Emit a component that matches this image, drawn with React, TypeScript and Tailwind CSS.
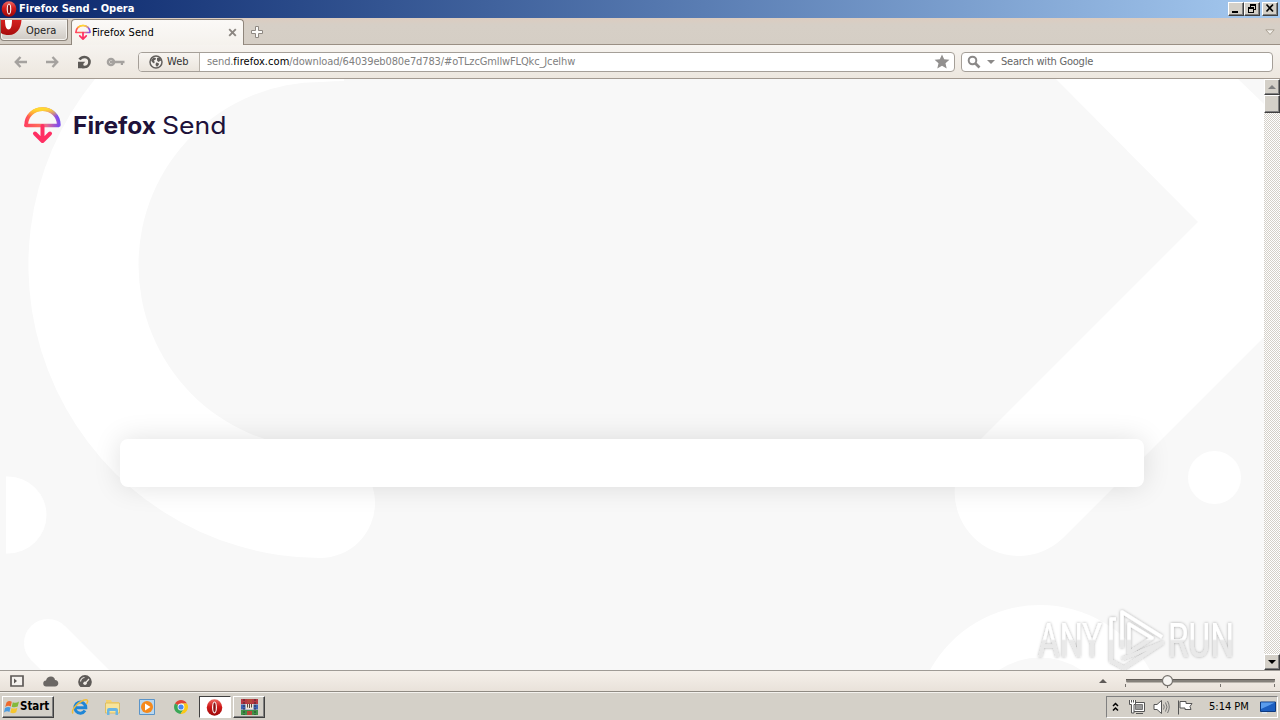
import React from "react";

const UI = "font-['DejaVu_Sans_Condensed','DejaVu_Sans',sans-serif]";
const RAISED =
  "border border-t-white border-l-white border-r-[#404040] border-b-[#404040] bg-[#d4d0c8] shadow-[inset_-1px_-1px_0_#808080]";

function OperaO({ size }: { size: number }) {
  return (
    <svg width={size} height={size} viewBox="0 0 16 16" className="shrink-0">
      <defs>
        <linearGradient id="operaRed" x1="0" y1="0" x2="0" y2="1">
          <stop offset="0" stopColor="#ef6a62" />
          <stop offset=".45" stopColor="#d01b1b" />
          <stop offset="1" stopColor="#9c0808" />
        </linearGradient>
      </defs>
      <ellipse cx="8" cy="8" rx="7.3" ry="7.8" fill="url(#operaRed)" />
      <ellipse cx="8" cy="8" rx="2.3" ry="5.6" fill="#fff" />
      <ellipse cx="8" cy="8" rx="1.2" ry="4.6" fill="#8d1414" />
    </svg>
  );
}

function SendMark({ width, height, id }: { width: number; height: number; id: string }) {
  return (
    <svg width={width} height={height} viewBox="0 0 37 37" className="shrink-0">
      <defs>
        <linearGradient id={id + "dome"} x1="0" y1=".9" x2="1" y2=".75">
          <stop offset="0" stopColor="#ff3d62" />
          <stop offset=".3" stopColor="#ff8a3c" />
          <stop offset=".55" stopColor="#ffae30" />
          <stop offset=".78" stopColor="#e0609a" />
          <stop offset="1" stopColor="#7a4df0" />
        </linearGradient>
        <linearGradient id={id + "top"} x1="0" y1="0" x2="0" y2="1">
          <stop offset="0" stopColor="#ffd930" />
          <stop offset="1" stopColor="#ffd930" stopOpacity="0" />
        </linearGradient>
        <linearGradient id={id + "base"} x1="0" y1="0" x2="1" y2="0">
          <stop offset="0" stopColor="#ff4060" />
          <stop offset=".4" stopColor="#ff6a58" />
          <stop offset=".65" stopColor="#e86a90" />
          <stop offset="1" stopColor="#7a4df0" />
        </linearGradient>
      </defs>
      <path d="M2.2 18C2.2 9 9.5 2.2 18.5 2.2S34.800 9 34.800 18" fill="none" stroke={`url(#${id}dome)`} strokeWidth="3.800" strokeLinecap="round" />
      <path d="M5 9.500C8 4.500 13 2.200 18.500 2.200S29 4.500 32 9.500" fill="none" stroke={`url(#${id}top)`} strokeWidth="3.800" />
      <path d="M2 16.700h33v3.600H2a1.800 1.800 0 0 1 0-3.600z" fill={`url(#${id}base)`} />
      <path d="M18.500 19v14M11 26.500l7.500 7.500 7.500-7.500" fill="none" stroke="#ff2f63" strokeWidth="4" strokeLinecap="round" strokeLinejoin="round" />
    </svg>
  );
}

function TitleBar() {
  return (
    <div className="flex h-[18px] items-center bg-linear-to-r from-[#0a246a] to-[#a6caf0] pr-[2px] pl-[1px]">
      <OperaO size={16} />
      <span className="ml-[2px] text-[11px] leading-[16px] font-bold text-white">Firefox Send - Opera</span>
      <div className="ml-auto flex pb-px">
        <button className={`flex h-[14px] w-4 items-center justify-center ${RAISED}`}>
          <svg width="12" height="11" viewBox="0 0 12 11"><path d="M2 8h6v2H2z" /></svg>
        </button>
        <button className={`flex h-[14px] w-4 items-center justify-center ${RAISED}`}>
          <svg width="12" height="11" viewBox="0 0 12 11" shapeRendering="crispEdges">
            <path d="M4 1h6v6H8V6h1V3H5v1H4zM2 4h6v6H2zM3 6v3h4V6z" fillRule="evenodd" />
          </svg>
        </button>
        <button className={`ml-[2px] flex h-[14px] w-4 items-center justify-center ${RAISED}`}>
          <svg width="12" height="11" viewBox="0 0 12 11"><path d="M2.500 1.500l6.500 7M9 1.500l-6.500 7" stroke="#000" strokeWidth="1.700" /></svg>
        </button>
      </div>
    </div>
  );
}

function TabBar() {
  return (
    <div className="flex h-[27px] items-start bg-linear-to-b from-[#dcccc0] via-[#d6cfc6] via-25% to-[#d5cec5] shadow-[inset_0_-1px_0_#9a8f84]">
      <button className="mt-px flex h-[22px] w-[68px] items-center rounded-b-[4px] border border-[#8d857c] border-t-[#b8b0a8] bg-linear-to-b from-[#f0eeeb] to-[#cfcac4] shadow-[inset_0_0_0_1px_#f5f3f0]">
        <svg width="21" height="20" viewBox="0 0 21 20" className="shrink-0">
          <defs>
            <linearGradient id="menuRed" x1="0" y1="0" x2="0" y2="1">
              <stop offset="0" stopColor="#d42020" />
              <stop offset="1" stopColor="#a80c0c" />
            </linearGradient>
          </defs>
          <path d="M0 0h20.500C20 8 16 15 8 15 4.500 15 2 14.500 0 13z" fill="url(#menuRed)" />
          <path d="M4 0h7c0 5-.8 9.500-3.500 9.500S4 5 4 0z" fill="#fff" />
        </svg>
        <span className="mt-[2px] ml-[4px] text-[11px] text-[#222]">Opera</span>
      </button>
      <div className="mt-px ml-[3px] flex h-[26px] w-[173px] items-center rounded-t-[4px] border border-b-0 border-[#8f867c] bg-linear-to-b from-[#fbf9f7] to-[#f5f2ed] pl-[3px]">
        <SendMark width={16} height={17} id="tab" />
        <span className="mt-[2px] ml-px text-[11px] tracking-[0.1px] text-black">Firefox Send</span>
        <svg width="9" height="9" viewBox="0 0 9 9" className="mr-[6px] ml-auto"><path d="M1.200 1.200l6.600 6.600M7.800 1.200L1.200 7.800" stroke="#8b8681" strokeWidth="1.900" /></svg>
      </div>
      <svg width="14" height="14" viewBox="0 0 14 14" className="mt-[7px] ml-[6px]">
        <path d="M5.500 1.500h3v4h4v3h-4v4h-3v-4h-4v-3h4z" fill="#fbfaf8" stroke="#8e8882" />
      </svg>
      <svg width="10" height="7" viewBox="0 0 10 7" className="mt-[11px] mr-[5px] ml-auto">
        <path d="M.8.800h8.400L5 5.500z" fill="#f4f1ec" stroke="#aaa294" />
      </svg>
    </div>
  );
}

function Toolbar() {
  return (
    <div className="flex h-[34px] items-center border-b border-[#a39a91] bg-linear-to-b from-[#f6f3ef] to-[#ede7df] pr-[7px] pl-[14px]">
      <svg width="14" height="12" viewBox="0 0 14 12"><path d="M6.500 1L1.800 6l4.700 5M2.500 6H13" fill="none" stroke="#a5a29f" strokeWidth="2.400" /></svg>
      <svg width="14" height="12" viewBox="0 0 14 12" className="ml-[17px]"><path d="M7.500 1l4.700 5-4.700 5M11.500 6H1" fill="none" stroke="#a5a29f" strokeWidth="2.400" /></svg>
      <svg width="15" height="14" viewBox="0 0 15 14" className="ml-[18px]">
        <path d="M2.500 4.500C4 2.500 5.500 2 7.500 2a5 5 0 0 1 0 10H5" fill="none" stroke="#5d5a57" strokeWidth="2.700" />
        <path d="M1 6.700h7.300L6.200 9l1.300 4.300H1z" fill="#5d5a57" />
      </svg>
      <svg width="20" height="10" viewBox="0 0 20 10" className="ml-[14px]">
        <circle cx="5" cy="5" r="3" fill="none" stroke="#a5a29f" strokeWidth="2.600" />
        <path d="M4 3.700h14.500v2.600H17V8h-2.200V6.300H4z" fill="#a5a29f" />
      </svg>
      <div className="ml-[12px] flex h-5 w-[817px] items-center overflow-hidden rounded-[4px] border border-[#a59f98] bg-white">
        <div className="flex h-full w-[61px] shrink-0 items-center border-r border-[#b8b2aa] bg-linear-to-b from-[#f8f5f1] to-[#ebe5dd] pl-[10px]">
          <svg width="14" height="14" viewBox="0 0 14 14">
            <circle cx="7" cy="7" r="6" fill="#f5f2ee" stroke="#625f5c" strokeWidth="1.500" />
            <path d="M2 5L4.500 2.500l2.500.5-.5 1.700-1.700.8 1 1.500L5 8.500 3 7zM8 3l2.500-.5 2 3-1.500.5L9.500 7 8 5.500zM7 7.500l2.500.5.500 1.500L8 12 6.500 10z" fill="#625f5c" />
          </svg>
          <span className="mt-[2px] ml-[4px] text-[11px] text-[#333]">Web</span>
        </div>
        <span className="mt-[2px] ml-[7px] text-[11px] tracking-[-0.13px] whitespace-nowrap text-[#808080]">
          send.<span className="tracking-[0.05px] text-black">firefox.com</span>/download/64039eb080e7d783/#oTLzcGmllwFLQkc_Jcelhw
        </span>
        <svg width="16" height="15" viewBox="0 0 16 15" className="mr-[4px] ml-auto">
          <path d="M8 .5l2.200 4.800 5.200.5-3.900 3.500 1.200 5.200L8 11.800l-4.700 2.700 1.200-5.200L.600 5.800l5.200-.5z" fill="#92908f" />
        </svg>
      </div>
      <div className="ml-[6px] flex h-5 flex-1 items-center rounded-[4px] border border-[#a59f98] bg-white pl-[5px]">
        <svg width="14" height="14" viewBox="0 0 14 14">
          <circle cx="5.500" cy="5.500" r="3.800" fill="none" stroke="#8b8988" strokeWidth="2" />
          <path d="M8.500 8.500l4 4" stroke="#8b8988" strokeWidth="2.600" />
        </svg>
        <svg width="8" height="4" viewBox="0 0 8 4" className="ml-[6px]"><path d="M0 0h8L4 4z" fill="#8b8988" /></svg>
        <span className="mt-[2px] ml-[6px] text-[11px] tracking-[-0.23px] text-[#666]">Search with Google</span>
      </div>
    </div>
  );
}

function Backdrop() {
  return (
    <svg width="1264" height="591" viewBox="0 79 1264 591" className="absolute inset-0">
      <g fill="#fff">
        <path d="M95 79A293 293 0 0 0 320 558A55 55 0 0 0 320 448A182.500 183 0 0 1 322 82Q334 81 344 81V79z" />
        <path d="M1056 79L1198 222L973 447A64 64 0 0 0 1063 538L1264 337V104L1238 79z" />
        <ellipse cx="1214.500" cy="477.500" rx="26.500" ry="26.500" />
        <path d="M6 476.500H8A38.500 38.500 0 0 1 8 553.500H6z" />
        <path d="M41 670L31 660A24 24 0 0 1 65 626L109 670z" />
        <path d="M930 670A125.600 125.600 0 0 1 1150 670H1081A74 74 0 0 0 999 670z" />
      </g>
    </svg>
  );
}

function Watermark() {
  return (
    <svg width="264" height="72" viewBox="1000 602 264 72" className="absolute right-0 bottom-[-4px]">
      <defs>
        <linearGradient id="wm" gradientUnits="userSpaceOnUse" x1="0" y1="610" x2="0" y2="668">
          <stop offset=".5" stopColor="#fff" />
          <stop offset=".53" stopColor="#e9e9e9" />
        </linearGradient>
        <filter id="wmShadow" x="-10%" y="-20%" width="120%" height="140%">
          <feDropShadow dx="0" dy="0" stdDeviation="1.500" floodColor="#000" floodOpacity=".34" />
        </filter>
      </defs>
      <g filter="url(#wmShadow)" fill="url(#wm)" className="font-['Roboto',sans-serif]">
        <text x="1038" y="657" fontSize="49" textLength="64" lengthAdjust="spacingAndGlyphs">ANY</text>
        <text x="1168" y="657" fontSize="49" textLength="66" lengthAdjust="spacingAndGlyphs">RUN</text>
        <g fill="none" stroke="url(#wm)" strokeWidth="3.500" strokeLinejoin="round">
          <path d="M1122 648V612L1162 637M1116 619L1111 619V661L1124 668L1162 643L1122 659" />
          <path d="M1129 653V624L1152 638z" />
        </g>
      </g>
    </svg>
  );
}

function ScrollBar() {
  return (
    <div className="flex w-4 shrink-0 flex-col bg-[#ebe9e5] bg-[conic-gradient(#d4d0c8_25%,#ffffff_0_50%,#d4d0c8_0_75%,#ffffff_0)] bg-[length:2px_2px]">
      <div className={`flex h-4 items-center justify-center ${RAISED}`}>
        <svg width="8" height="4" viewBox="0 0 8 4"><path d="M0 4h8L4 0z" fill="#808080" /></svg>
      </div>
      <div className={`h-[18px] ${RAISED}`} />
      <div className={`mt-auto flex h-4 items-center justify-center ${RAISED}`}>
        <svg width="8" height="4" viewBox="0 0 8 4"><path d="M0 0h8L4 4z" /></svg>
      </div>
    </div>
  );
}

function Page() {
  return (
    <div className="flex h-[591px]">
      <div className="relative flex flex-1 flex-col overflow-hidden bg-[#f8f8f8]">
        <Backdrop />
        <header className="relative mt-[28px] ml-6 flex h-[37px] items-start">
          <SendMark width={37} height={37} id="logo" />
          <svg width="170" height="37" viewBox="0 0 170 37" className="ml-[10px] font-['Inter',sans-serif]" fill="#20123a">
            <text x="2" y="27" fontSize="24" fontWeight="700" textLength="83" lengthAdjust="spacingAndGlyphs">Firefox</text>
            <text x="91" y="27" fontSize="24" fontWeight="400" textLength="64.500" lengthAdjust="spacingAndGlyphs">Send</text>
          </svg>
        </header>
        <main className="relative mx-[120px] mt-[295px] h-12 rounded-lg bg-white shadow-[0_0_28px_rgba(0,0,0,0.12)]" />
        <Watermark />
      </div>
      <ScrollBar />
    </div>
  );
}

function StatusBar() {
  return (
    <div className="flex h-[22px] items-center border-t border-b border-t-[#9f9b96] border-b-[#8f8a83] bg-linear-to-b from-[#f5f0ea] to-[#e9e2da] pl-[10px]">
      <svg width="14" height="12" viewBox="0 0 14 12"><path d="M1 1h12v10H1z" fill="#f5f2ee" stroke="#5e5a57" strokeWidth="1.700" /><path d="M4 3.500L7 6 4 8.500z" fill="#5e5a57" /></svg>
      <svg width="16" height="11" viewBox="0 0 16 11" className="ml-[19px]"><path d="M3.500 10.500a3 3 0 0 1-.5-6C3.500 2 5.500.500 8 .500c2.200 0 3.800 1.500 4 3.500 2 0 3.300 1.400 3.300 3.200S14 10.500 12 10.500z" fill="#6b6764" /></svg>
      <svg width="16" height="14" viewBox="0 0 16 14" className="ml-[18px]">
        <path d="M3.500 13A6.800 6.800 0 1 1 12.500 13z" fill="#5e5a57" />
        <path d="M3.500 7.500A4.600 4.600 0 0 1 7.500 3.500M12 5L8.500 9" fill="none" stroke="#f0ebe5" strokeWidth="1.200" />
        <circle cx="8" cy="9.300" r="1.700" fill="#f0ebe5" />
      </svg>
      <svg width="8" height="4" viewBox="0 0 8 4" className="ml-auto"><path d="M0 4h8L4 0z" fill="#5e5a57" /></svg>
      <svg width="152" height="18" viewBox="0 0 152 18" className="mr-[3px] ml-[18px]">
        <rect x="1" y="7" width="149" height="3.500" rx="1.500" fill="#85817b" />
        <path d="M1 7.500h149" stroke="#625e59" />
        <path d="M.500 12v3M42.500 13v3M95.500 12v3M149.500 12v3" stroke="#77736e" />
        <circle cx="42.500" cy="8.700" r="5" fill="#f7f5f2" stroke="#77736e" strokeWidth="1.200" />
      </svg>
    </div>
  );
}

function TaskBar() {
  return (
    <div className="flex h-[28px] items-center bg-[#d4d0c8] pt-[2px] pr-[2px] pl-[2px] shadow-[inset_0_1px_0_#f4f2ee]">
      <button className={`flex h-[22px] w-[52px] items-center pl-px ${RAISED}`}>
        <svg width="16" height="16" viewBox="0 0 16 16" className="shrink-0">
          <path d="M2.500 3.500Q5 1 7.800 2.800L6.800 7.500Q4 6 1.200 8z" fill="#ee6a2c" />
          <path d="M8.800 3.200Q12 4.500 15 2.500L13.700 7.500Q10.500 9 7.700 7.800z" fill="#84b93a" />
          <path d="M1 9Q4 7.300 6.600 8.600L5.400 13Q3 11.500 0 13.500z" fill="#4a9be0" />
          <path d="M7.500 9Q10.300 10.300 13.400 8.700L12.200 13.300Q9 15 6.300 13.400z" fill="#f6c62f" />
        </svg>
        <span className="text-[11.500px] font-bold tracking-[-0.050px] text-black">Start</span>
      </button>
      <svg width="18" height="18" viewBox="0 0 18 18" className="ml-[17px]">
        <path d="M14 12.500A5.500 5.500 0 1 1 14.800 9.700H4.500" fill="none" stroke="#1f86d6" strokeWidth="3" />
        <path d="M2 15.500C-.5 12 8.500 2.500 15 1.800c2.500-.2 1.700 2.700.5 4.200" fill="none" stroke="#f0bd3a" strokeWidth="1.500" />
      </svg>
      <svg width="18" height="18" viewBox="0 0 18 18" className="ml-[15px]">
        <path d="M2 2h5l1 2h7v5H2z" fill="#f3d272" />
        <path d="M1.500 5h14v10h-14z" fill="#f8e49a" stroke="#d9b654" strokeWidth=".8" />
        <path d="M3 17v-5q0-2 2-2h7q2 0 2 2v5h-2.500v-4h-6v4z" fill="#69b5e4" />
      </svg>
      <svg width="18" height="18" viewBox="0 0 18 18" className="ml-[16px]">
        <path d="M1.500 1.500h15v15h-15z" fill="#b9d7ef" stroke="#5b94c8" />
        <circle cx="9" cy="9" r="6" fill="#f5891c" />
        <path d="M7 5.500v7L12.500 9z" fill="#fff" />
      </svg>
      <svg width="14" height="14" viewBox="0 0 14 14" className="ml-[18px]">
        <path d="M7 7L1 3.500A7 7 0 0 1 13 3.500H7z" fill="#e04436" />
        <path d="M7 7L1 3.500A7 7 0 0 0 6.500 14L10 8.500z" fill="#3aa757" />
        <path d="M7 3.500h6A7 7 0 0 1 6.500 14L10 8.700z" fill="#fbc916" />
        <circle cx="7" cy="7" r="3.400" fill="#fff" />
        <circle cx="7" cy="7" r="2.600" fill="#4688f1" />
      </svg>
      <div className="ml-[11px] flex h-[22px] w-8 items-center border border-t-[#404040] border-r-white border-b-white border-l-[#404040] bg-white pl-[6px]">
        <OperaO size={17} />
      </div>
      <div className={`ml-[2px] flex h-[22px] w-8 items-center justify-center ${RAISED}`}>
        <svg width="17" height="16" viewBox="0 0 17 16">
          <path d="M0 0h17v5H0z" fill="#b63742" />
          <path d="M0 5.500h17v5H0z" fill="#3d63b4" />
          <path d="M0 11h17v5H0z" fill="#3f9148" />
          <path d="M6 0h5v4H6zM6 12h5v4H6z" fill="#b5483a" />
          <path d="M4.500 5h8v5.500h-8z" fill="#eee6d8" />
          <path d="M6.500 5v3.500M8.500 5v4M10.500 5v3.500" stroke="#594a3c" />
          <path d="M3 0v16M14 0v16" stroke="#28262a" strokeWidth=".8" strokeDasharray="2 1" />
        </svg>
      </div>
      <div className="ml-auto flex h-[22px] w-[172px] items-center border border-t-[#808080] border-r-white border-b-white border-l-[#808080] pl-[5px]">
        <svg width="7" height="10" viewBox="0 0 7 10"><path d="M1 4l2.500-2.500L6 4M1 8.500L3.500 6 6 8.500" fill="none" stroke="#000" strokeWidth="1.500" /></svg>
        <svg width="17" height="16" viewBox="0 0 17 16" className="ml-[10px]">
          <path d="M4.500 3.500h11v9h-11z" fill="#fff" stroke="#555" />
          <path d="M6.500 5.500h7v5h-7z" fill="#999" stroke="#777" />
          <path d="M7 14.500h7" stroke="#555" />
          <path d="M.5 1v4.500h2V14H5V5.500h1.500V1M2.500 1v2.500M4.500 1v2.500" fill="#fff" stroke="#555" />
        </svg>
        <svg width="17" height="16" viewBox="0 0 17 16" className="ml-[7px]">
          <path d="M1 5.500h3L8.500 1.500v13L4 10.500H1z" fill="#fff" stroke="#555" />
          <path d="M10.500 5.500q1.500 2.500 0 5M12.500 3.500q3 4.500 0 9M14.500 2q3.500 6 0 12" fill="none" stroke="#777" />
        </svg>
        <svg width="16" height="16" viewBox="0 0 16 16" className="ml-[7px]">
          <path d="M1.500 1.500v14M3 2.500h6v2h6l-2 3 1 3H8v-1.500H3z" fill="#fff" stroke="#555" />
        </svg>
        <span className="mt-px ml-[16px] text-[11px] whitespace-nowrap text-black">5:14 PM</span>
        <svg width="16" height="14" viewBox="0 0 16 14" className="mr-[1px] ml-auto shrink-0">
          <path d="M.500 2h15v9.500H.500z" fill="#1d5fc0" stroke="#0d3a80" />
          <path d="M1 2.500h14L1 9z" fill="#5a9cec" />
          <path d="M2 12h5v1.500H2z" fill="#dfe8f2" />
        </svg>
      </div>
    </div>
  );
}

export default function App() {
  return (
    <div className={`flex h-[720px] w-[1280px] flex-col overflow-hidden ${UI}`}>
      <TitleBar />
      <TabBar />
      <Toolbar />
      <Page />
      <StatusBar />
      <TaskBar />
    </div>
  );
}
